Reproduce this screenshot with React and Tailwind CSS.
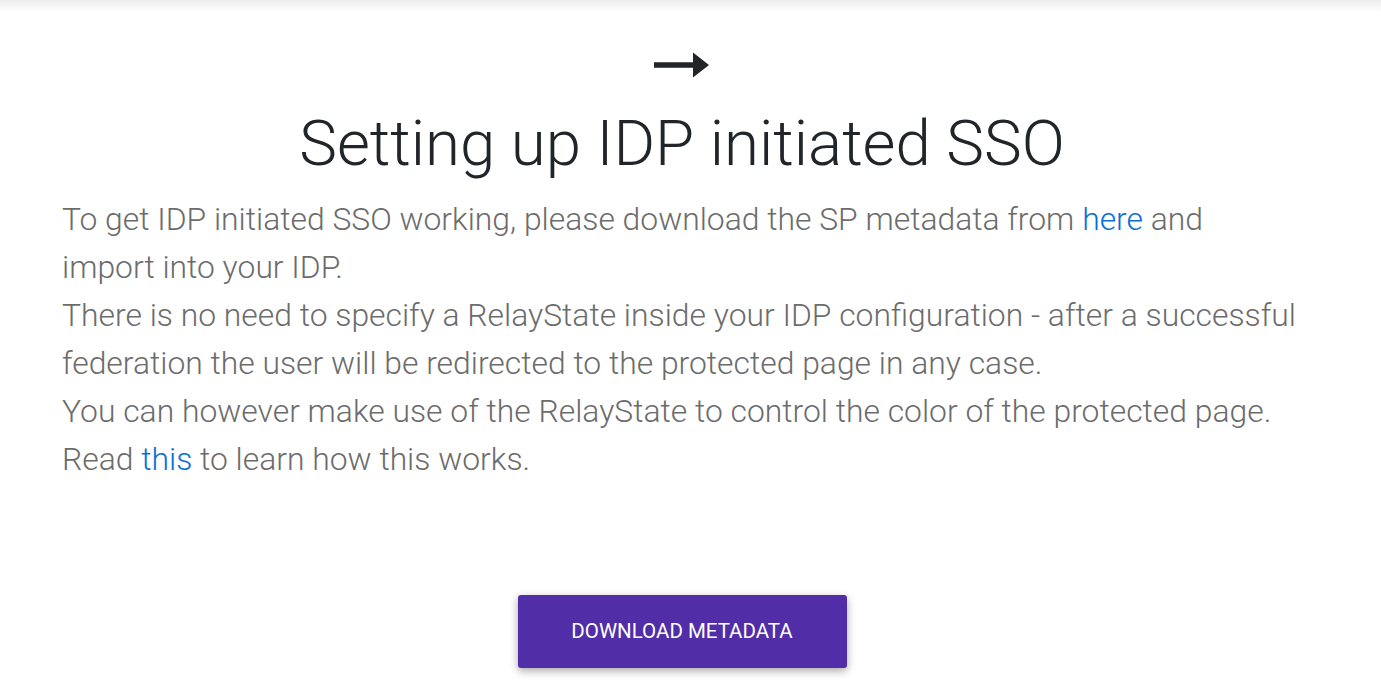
export default function App() {
  return (
    <div className="min-h-screen bg-white font-['Roboto',sans-serif] pr-[17px]">
      <div className="h-3 -mr-[17px] bg-gradient-to-b from-[#ececec] to-white" />
      <div className="flex flex-col items-center pt-[39px]">
        <svg width="56" height="28" viewBox="0 0 56 28" className="text-[#212529]">
          <path d="M0 11.2h39V1.5l16 12.5-16 12.5v-9.7H0z" fill="currentColor" strokeLinejoin="round" />
        </svg>
        <h1 className="mt-[27px] text-[63.6px] leading-[76px] font-light text-[#212529] whitespace-nowrap">
          Setting up IDP initiated SSO
        </h1>
      </div>
      <div className="px-[62px] mt-[13px] text-[31.85px] leading-[48px] font-light text-[#6c6c6c] whitespace-nowrap">
        <p>
          To get IDP initiated SSO working, please download the SP metadata from{" "}
          <a href="#" className="text-[#0a6fd6]">here</a> and
          <br />
          import into your IDP.
        </p>
        <p>
          There is no need to specify a RelayState inside your IDP configuration - after a successful
          <br />
          federation the user will be redirected to the protected page in any case.
        </p>
        <p>
          You can however make use of the RelayState to control the color of the protected page.
          <br />
          Read <a href="#" className="text-[#0a6fd6]">this</a> to learn how this works.
        </p>
      </div>
      <div className="flex justify-center mt-[112px]">
        <button className="w-[329px] h-[73px] rounded-[3px] bg-[#512da8] text-white text-[20.5px] font-normal uppercase shadow-[0_3px_8px_rgba(0,0,0,0.35)]">
          Download Metadata
        </button>
      </div>
    </div>
  );
}
